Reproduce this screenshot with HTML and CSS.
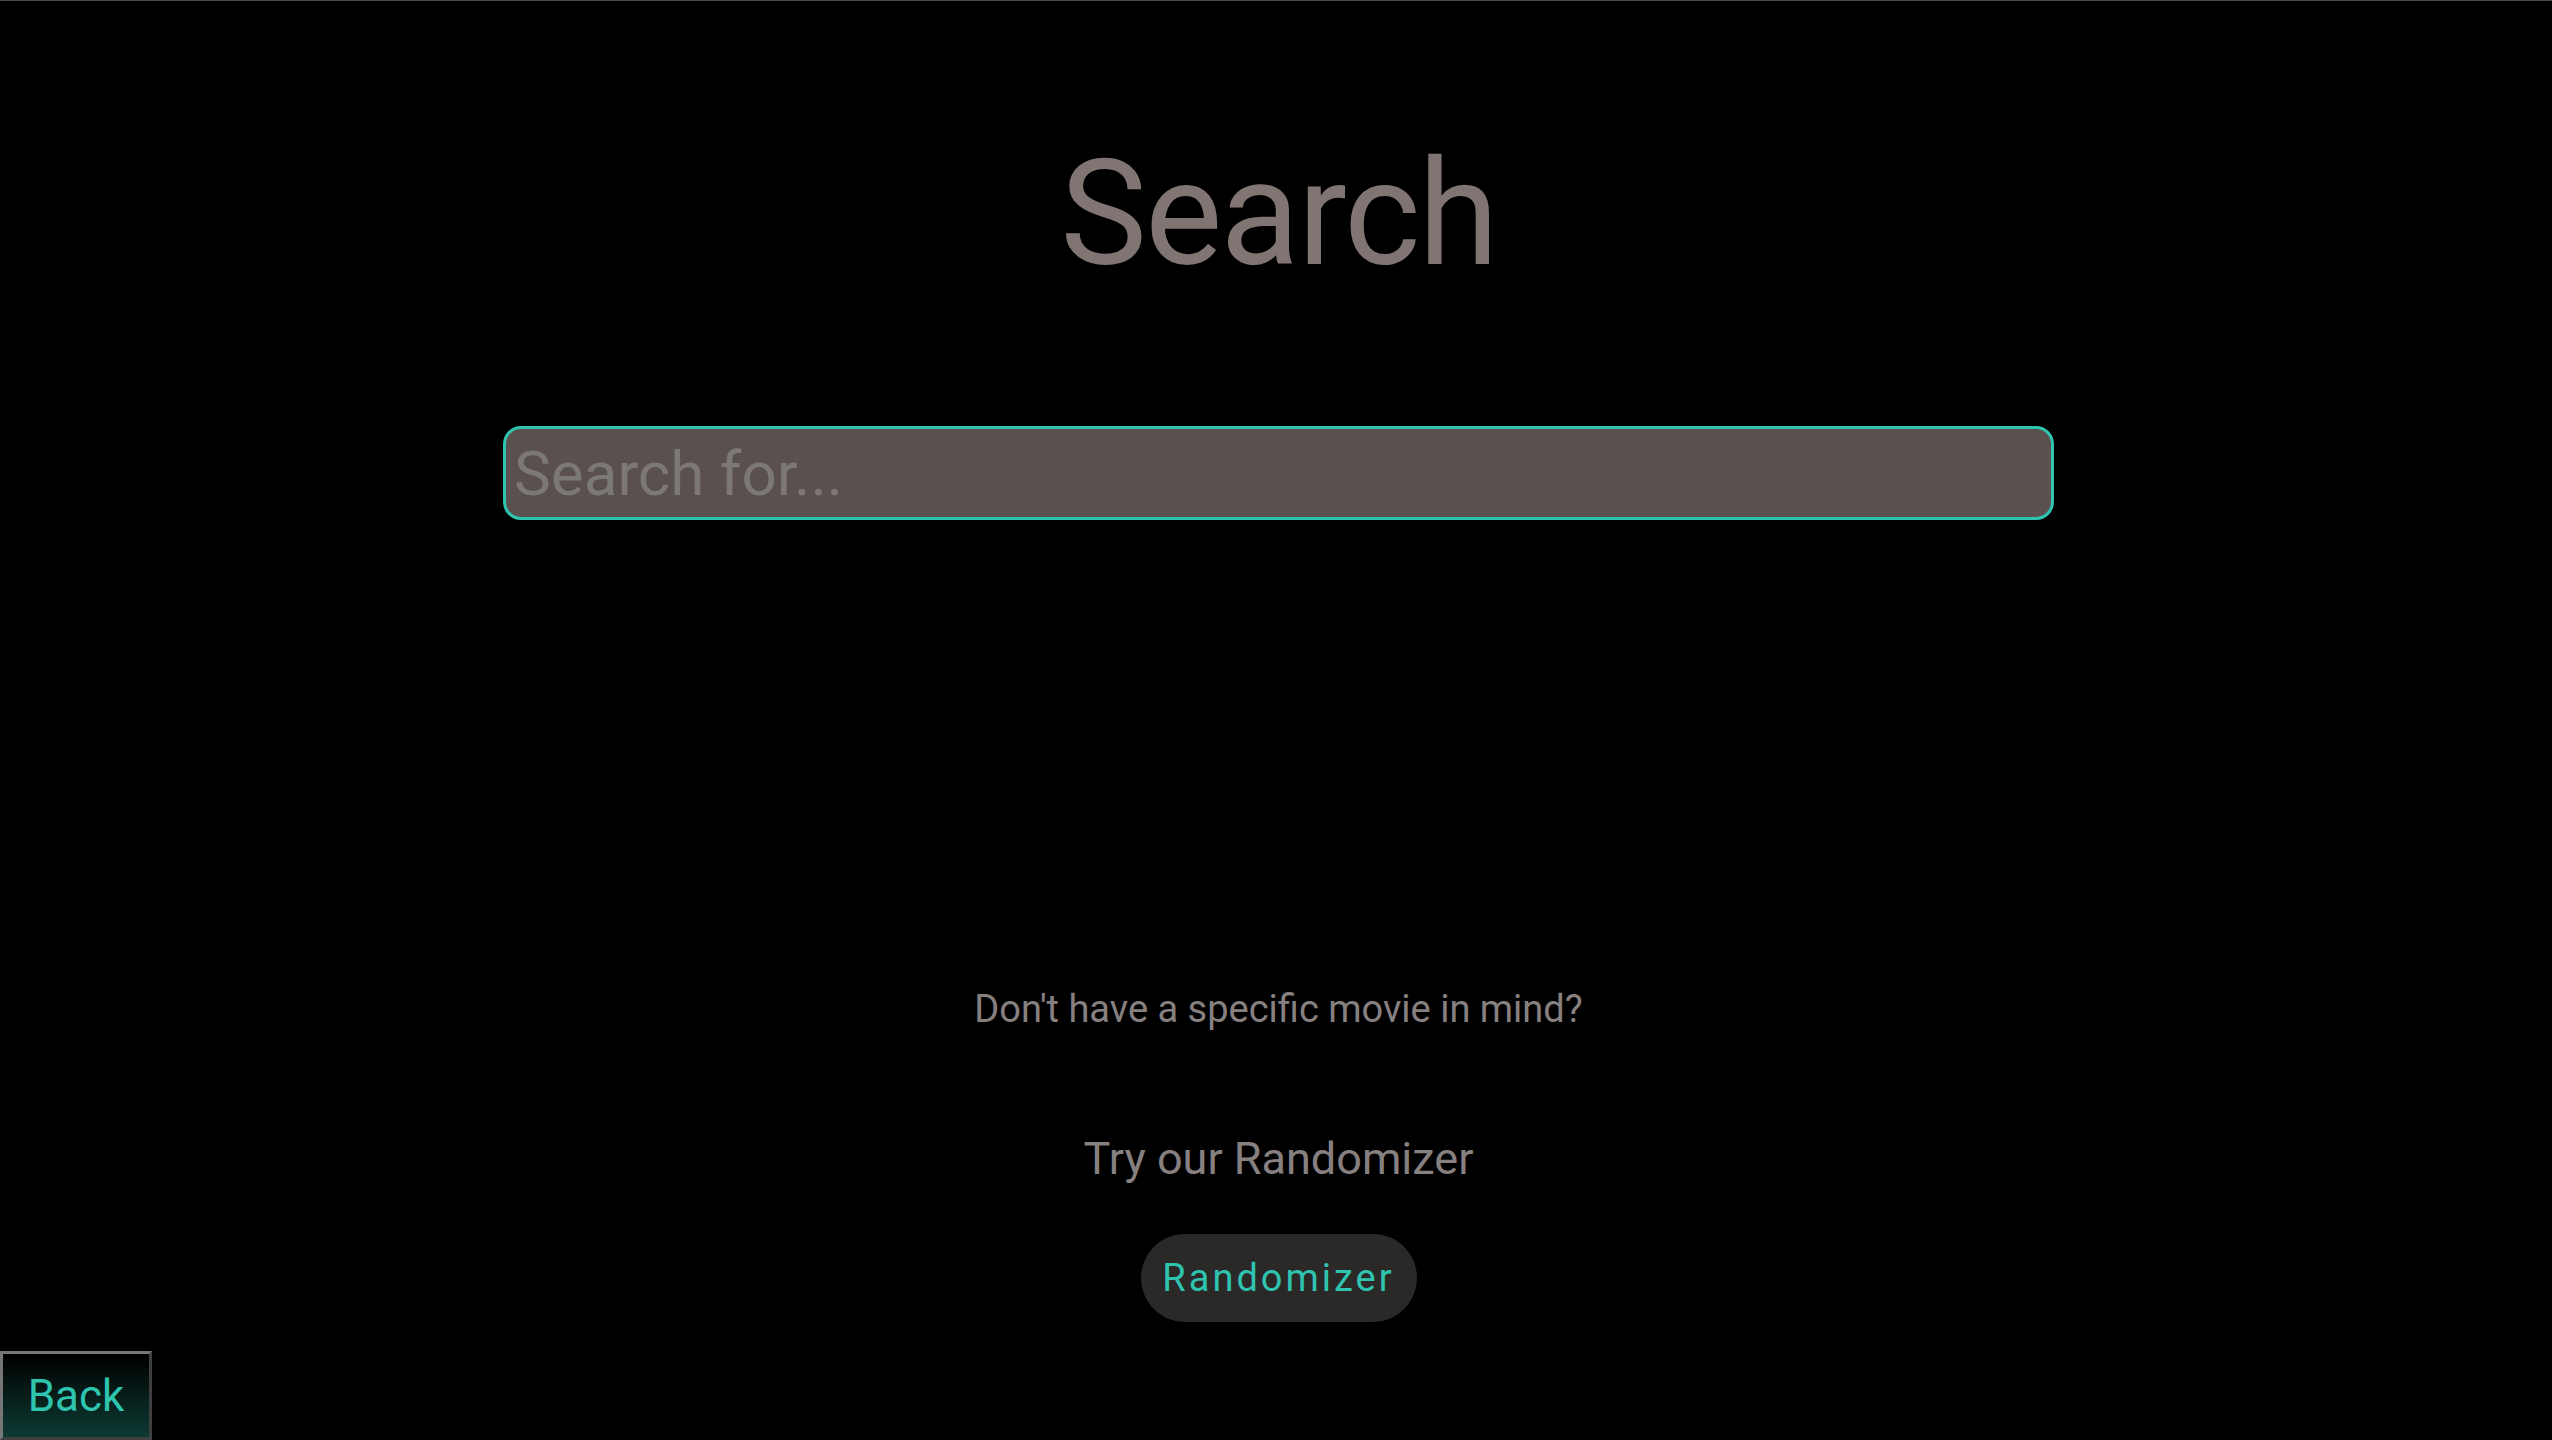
FILE: index.html
```html
<!DOCTYPE html>
<html lang="en">
<head>
<meta charset="utf-8">
<title>Search</title>
<link rel="stylesheet" href="styles.css">
</head>
<body>
<div class="page">
  <h1 class="title">Search</h1>
  <div class="search-wrap">
    <input class="search-input" type="text" placeholder="Search for...">
  </div>
  <p class="hint">Don't have a specific movie in mind?</p>
  <p class="try">Try our Randomizer</p>
  <button class="random-btn">Randomizer</button>
  <div class="footer">
    <button class="back-btn">Back</button>
  </div>
</div>
</body>
</html>
```
FILE: styles.css
```css
html, body {
  margin: 0;
  padding: 0;
  background: #000;
}
body {
  border-top: 1px solid #4a4a4a;
  box-sizing: border-box;
  height: 1440px;
  overflow: hidden;
  font-family: "Roboto", "Liberation Sans", sans-serif;
}
.page {
  display: flex;
  flex-direction: column;
  align-items: center;
  height: 1439px;
  padding-left: 5px;
  box-sizing: border-box;
}
.title {
  margin: 139px 0 0 0;
  font-size: 146px;
  line-height: 150px;
  font-weight: 400;
  color: #807573;
  letter-spacing: -2px;
}
.search-wrap {
  margin-top: 136px;
  width: 1551px;
}
.search-input {
  display: block;
  width: 100%;
  box-sizing: border-box;
  height: 94px;
  border: 3px solid #2ec4b0;
  border-radius: 18px;
  background: #5a504e;
  padding: 0 8px;
  font-family: inherit;
  font-size: 62px;
  color: #ddd;
  outline: none;
}
.search-input::placeholder {
  color: #7c7878;
}
.hint {
  margin: 465px 0 0 0;
  font-size: 38px;
  line-height: 48px;
  color: #878080;
}
.try {
  margin: 98px 0 0 0;
  font-size: 45px;
  line-height: 56px;
  color: #878080;
}
.random-btn {
  margin-top: 47px;
  width: 276px;
  height: 88px;
  border: none;
  border-radius: 44px;
  background: #2b2828;
  color: #2ec4b0;
  font-family: inherit;
  font-size: 38px;
  letter-spacing: 3px;
  padding: 0;
}
.footer {
  margin-top: auto;
  margin-left: -5px;
  align-self: stretch;
  display: flex;
}
.back-btn {
  width: 152px;
  height: 89px;
  border: 3px solid;
  border-color: #767676 #3f3f3f #3f3f3f #767676;
  background: linear-gradient(#000000, #0d3a33);
  color: #2ec4b0;
  font-family: inherit;
  font-size: 44px;
  padding: 0;
}
```
